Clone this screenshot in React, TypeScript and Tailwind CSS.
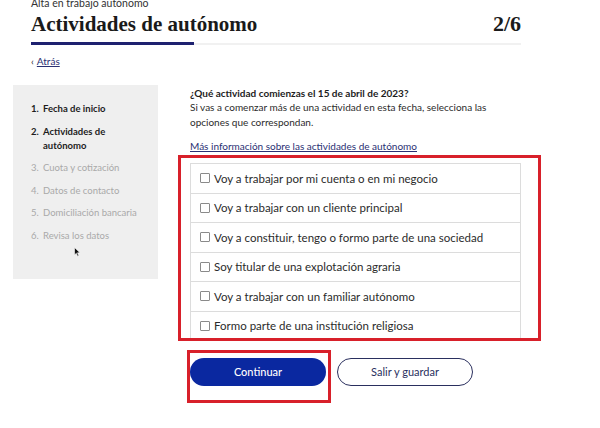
import React from 'react'

const steps = [
  { n: '1.', label: 'Fecha de inicio', done: true },
  { n: '2.', label: 'Actividades de autónomo', done: true },
  { n: '3.', label: 'Cuota y cotización', done: false },
  { n: '4.', label: 'Datos de contacto', done: false },
  { n: '5.', label: 'Domiciliación bancaria', done: false },
  { n: '6.', label: 'Revisa los datos', done: false },
]

const options = [
  'Voy a trabajar por mi cuenta o en mi negocio',
  'Voy a trabajar con un cliente principal',
  'Voy a constituir, tengo o formo parte de una sociedad',
  'Soy titular de una explotación agraria',
  'Voy a trabajar con un familiar autónomo',
  'Formo parte de una institución religiosa',
]

export default function App(): React.ReactElement {
  return (
    <div className="relative w-[600px] h-[428px] overflow-hidden bg-white text-[#222] font-['Lato','Noto_Sans',sans-serif]">
      {/* Header */}
      <div className="pl-[31px] w-[521px]">
        <div className="-mt-[2px] text-[10.5px] leading-[11px] text-[#333]">Alta en trabajo autónomo</div>
        <div className="flex items-end justify-between mt-[3px] font-['Liberation_Serif','DejaVu_Serif',serif] font-bold text-[#1a1a1a]">
          <h1 className="text-[21px] leading-[24px]">Actividades de autónomo</h1>
          <span className="text-[22px] leading-[24px]">2/6</span>
        </div>
        <div className="flex mt-[6px] h-[3px]">
          <div className="w-[163px] bg-[#1e2170]" />
          <div className="flex-1 h-[2px] mt-[1px] bg-[#f1f1f1]" />
        </div>
        <div className="mt-[10px] text-[10px] leading-[12px] flex items-center gap-[3px] text-[#222]">
          <span className="text-[10px]">‹</span>
          <a className="underline text-[#2a3073]">Atrás</a>
        </div>
      </div>

      {/* Body */}
      <div className="flex mt-[18px] pl-[13px]">
        <aside className="w-[145px] h-[194px] bg-[#efefef] pt-[17px] pl-[18px] pr-[14px]">
          <ol className="flex flex-col gap-[8.5px] text-[9.5px] leading-[14px]">
            {steps.map((s) => (
              <li key={s.n} className={`flex ${s.done ? 'font-bold text-[#1d1d1d]' : 'text-[#a9a9a9]'}`}>
                <span className="w-[12px] shrink-0">{s.n}</span>
                <span>{s.label}</span>
              </li>
            ))}
          </ol>
        </aside>

        <main className="ml-[32px] w-[331px] pt-[1px]">
          <p className="text-[10px] leading-[14px] font-bold text-[#1d1d1d]">
            ¿Qué actividad comienzas el 15 de abril de 2023?
          </p>
          <p className="text-[10px] leading-[15px] text-[#2b2b2b]">
            Si vas a comenzar más de una actividad en esta fecha, selecciona las opciones que correspondan.
          </p>
          <a className="block mt-[9px] text-[10px] leading-[14px] underline text-[#2a3073]">
            Más información sobre las actividades de autónomo
          </a>

          <div className="mt-[10px] border border-[#dcdcdc] border-b-0">
            {options.map((o) => (
              <label
                key={o}
                className="flex items-center gap-[4px] h-[29.5px] pl-[9px] border-b border-[#dcdcdc] text-[11.5px] text-[#2b2b2b]"
              >
                <span className="w-[10px] h-[10px] border border-[#8a8a8a] rounded-[1px] bg-white shrink-0" />
                <span>{o}</span>
              </label>
            ))}
          </div>

          <div className="flex gap-[11px] mt-[17px]">
            <button className="w-[136px] h-[28px] rounded-full bg-[#0a28a0] text-white text-[11px] font-medium">
              Continuar
            </button>
            <button className="w-[136px] h-[28px] rounded-full border border-[#2a2f5e] text-[#2a2f5e] text-[11px] bg-white">
              Salir y guardar
            </button>
          </div>
        </main>
      </div>

      {/* Mouse cursor */}
      <svg className="absolute left-[74px] top-[247px]" width="7" height="10" viewBox="0 0 7 10">
        <path d="M0.5 0.5 L0.5 8 L2.3 6.3 L3.6 9.3 L4.8 8.8 L3.5 5.8 L6 5.8 Z" fill="#111" stroke="#fff" strokeWidth="0.6" />
      </svg>

      {/* Annotation boxes */}
      <div className="absolute left-[178px] top-[155px] w-[363px] h-[186px] border-[3px] border-[#d8202a] pointer-events-none" />
      <div className="absolute left-[187px] top-[350px] w-[144px] h-[53px] border-[3px] border-[#d8202a] pointer-events-none" />
    </div>
  )
}
